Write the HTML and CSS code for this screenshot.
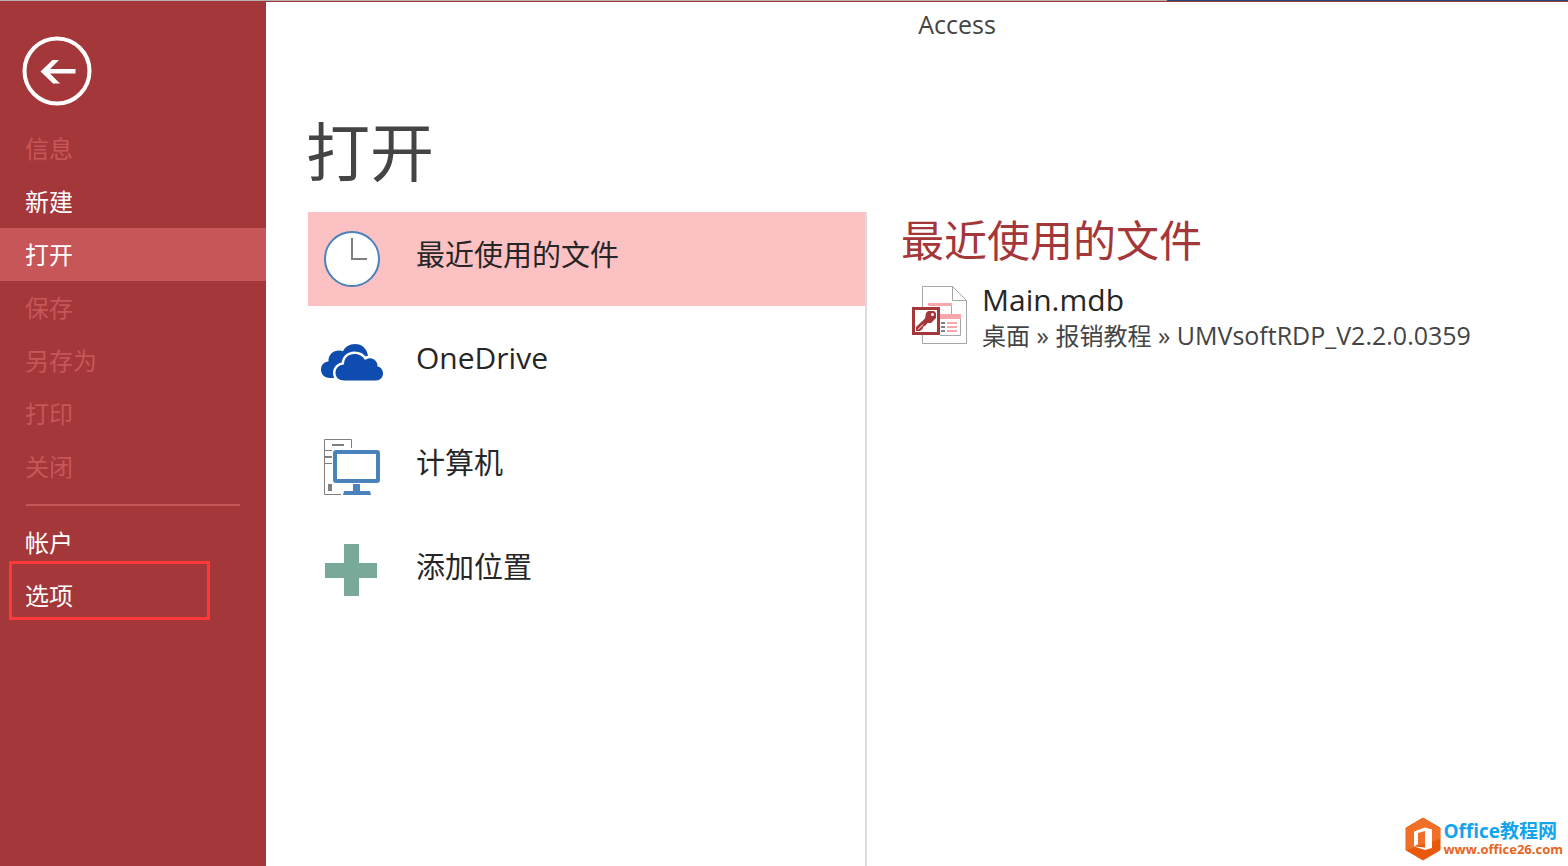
FILE: index.html
```html
<!DOCTYPE html>
<html lang="zh-CN">
<head>
<meta charset="utf-8">
<title>Access</title>
<link rel="stylesheet" href="styles.css">
</head>
<body>
<div class="desktop-edge"></div>
<div class="backstage">
  <nav class="sidebar">
    <button class="back" type="button" aria-label="返回">
      <svg width="70" height="70" viewBox="0 0 70 70">
        <circle cx="35" cy="35" r="32.5" fill="none" stroke="#fff" stroke-width="4"/>
        <path d="M18.500 35.500 L30.500 24 H37 L28 33 H53.500 V37.500 H28 L38 47.500 H31 Z" fill="#fff"/>
      </svg>
    </button>
    <ul class="menu">
      <li><button class="item" type="button" disabled>信息</button></li>
      <li><button class="item" type="button">新建</button></li>
      <li><button class="item active" type="button">打开</button></li>
      <li><button class="item" type="button" disabled>保存</button></li>
      <li><button class="item" type="button" disabled>另存为</button></li>
      <li><button class="item" type="button" disabled>打印</button></li>
      <li><button class="item" type="button" disabled>关闭</button></li>
    </ul>
    <hr class="divider">
    <ul class="menu">
      <li><button class="item" type="button">帐户</button></li>
      <li><button class="item marked" type="button">选项</button></li>
    </ul>
  </nav>
  <main class="content">
    <header class="titlebar">Access</header>
    <h1 class="page-title">打开</h1>
    <div class="panes">
      <section class="places">
        <button class="place selected" type="button">
          <svg class="place-icon" viewBox="0 0 64 64">
            <circle cx="32" cy="32" r="27" fill="#fff" stroke="#4a82bb" stroke-width="2"/>
            <path d="M32 11 V32 H47" fill="none" stroke="#808080" stroke-width="2"/>
          </svg>
          <span class="place-name">最近使用的文件</span>
        </button>
        <button class="place" type="button">
          <svg class="place-icon" viewBox="0 0 64 64">
            <path d="M10 47 C4 47 1 43 1 38.500 C1 34 4 31 8.500 30.500 C8 24 13 19.500 19 19.500 C20.500 19.500 22 19.800 23 20.300 C25 16 29.500 13 35 13 C42 13 47 17.500 48 25 L44 47 Z" fill="#0f4cb0"/>
            <path d="M24 49.500 C19 49.500 15.500 46.500 15.500 42 C15.500 37 19 33.700 24 33.500 C24 27 28.500 23 34.500 23 C39.500 23 43 25.500 45 29 C51 24.500 58 29 57.500 35.500 C61 36 63 39 63 42.500 C63 46.500 60 49.500 56 49.500 Z" fill="#0f4cb0" stroke="#fff" stroke-width="5" paint-order="stroke"/>
          </svg>
          <span class="place-name latin">OneDrive</span>
        </button>
        <button class="place" type="button">
          <svg class="place-icon" viewBox="0 0 64 64">
            <path d="M31.500 13 V4.500 H4.500 V59.500 H21 M4 15.500 H12 M4 28.500 H12" fill="none" stroke="#808080"/>
            <path d="M12 10 H24 M5 22 H12" stroke="#808080" stroke-width="2"/>
            <path d="M8 49 H12 V56 H8 Z" fill="#808080"/>
            <rect x="15" y="17" width="43" height="29" rx="1" fill="#fff" stroke="#4a82bb" stroke-width="4"/>
            <path d="M33 49 H40 V56 H50 L51 60 H23 L24 56 H33 Z" fill="#4a82bb"/>
          </svg>
          <span class="place-name">计算机</span>
        </button>
        <button class="place" type="button">
          <svg class="place-icon" viewBox="0 0 64 64">
            <path d="M24 5 H39 V24 H57 V39 H39 V57 H24 V39 H5 V24 H24 Z" fill="#79a998"/>
          </svg>
          <span class="place-name">添加位置</span>
        </button>
      </section>
      <section class="recent">
        <h2 class="recent-title">最近使用的文件</h2>
        <a class="file" href="#">
          <svg class="file-icon" viewBox="0 0 56 60">
            <path d="M10.500 .5 H40.500 L54.500 14.500 V57.500 H10.500 Z" fill="#fff" stroke="#a6a6a6"/>
            <path d="M40.500 .5 V14.500 H54.500" fill="none" stroke="#a6a6a6"/>
            <path d="M39.500 20 V28 M48.500 33 V49.500 H28" fill="none" stroke="#a6a6a6"/>
            <path d="M16 17 H40 V20 H16 Z M28 28 H49 V33 H28 Z M35 36 H45 V38 H35 Z M35 40 H45 V42 H35 Z M35 44 H45 V46 H35 Z" fill="#f7a6ab"/>
            <path d="M29 36 H33 V38 H29 Z M29 40 H33 V42 H29 Z M29 44 H33 V46 H29 Z" fill="#808080"/>
            <rect x="1.500" y="22.500" width="25" height="25" fill="#fff" stroke="#a4373a" stroke-width="3"/>
            <path d="M14 27 L16 25 H22 L24 27 V32 L19 37 H15.500 L13.500 39.500 L11.500 40.500 L10.500 43 L8 45 H4 V41 L13 32.500 Z" fill="#a4373a"/>
            <circle cx="20.500" cy="28.500" r="1.500" fill="#fff"/>
            <path d="M6 43.500 L11 38.500" stroke="#fff"/>
          </svg>
          <span class="file-text">
            <span class="file-name">Main.mdb</span>
            <span class="file-path"><span class="folder">桌面</span> » <span class="folder">报销教程</span> » UMVsoftRDP_V2.2.0.0359</span>
          </span>
        </a>
      </section>
    </div>
  </main>
</div>
<a class="watermark" href="#">
  <svg width="36" height="44" viewBox="0 0 36 44">
    <path d="M18 1 L35 11 V33 L18 43 L1 33 V11 Z" fill="#e8590c" stroke="#e8590c" stroke-width="1" stroke-linejoin="round"/>
    <path d="M18 1 L35 11 V22 L1 33 V11 Z" fill="#f0702a"/>
    <path d="M9 14.500 L20 10.500 L27 12.500 V31 L20 33 L9 29.500 L20 30.500 V14 L13 16 V27 L9 29.500 Z" fill="#fff"/>
  </svg>
  <span class="watermark-text">
    <span class="watermark-name">Office教程网</span>
    <span class="watermark-url">www.office26.com</span>
  </span>
</a>
</body>
</html>
```
FILE: styles.css
```css
* {
  box-sizing: border-box;
}

body {
  margin: 0;
  min-height: 100vh;
  display: flex;
  flex-direction: column;
  background: #fff;
  color: #262626;
  font-family: "Open Sans", "Noto Sans CJK SC", sans-serif;
}

button {
  border: 0;
  padding: 0;
  background: none;
  color: inherit;
  font: inherit;
  text-align: left;
}

a {
  color: inherit;
  text-decoration: none;
}

.desktop-edge {
  height: 2px;
  border-bottom: 1px solid #a4373a;
  background: linear-gradient(90deg, #b5b1b1 1167px, #1c4a78 1167px);
}

.backstage {
  flex: 1;
  display: grid;
  grid-template-columns: 266px 1fr;
}

.sidebar {
  background: #a4373a;
  color: #fff;
}

.back {
  display: block;
  margin: 34px 0 16px 22px;
  height: 70px;
}

.menu {
  margin: 0;
  padding: 0;
  list-style: none;
}

.item {
  position: relative;
  display: block;
  width: 100%;
  height: 53px;
  padding: 0 25px;
  font-size: 24px;
  line-height: 52px;
}

.item:disabled {
  color: #c75659;
}

.active {
  background: #c75659;
}

.divider {
  height: 2px;
  margin: 11px 26px 10px;
  border: 0;
  background: #c75659;
}

.marked::after {
  content: "";
  position: absolute;
  inset: -8px 56px 2px 9px;
  border: 3px solid #ff3838;
}

.content {
  display: flex;
  flex-direction: column;
  padding-left: 42px;
}

.titlebar {
  padding-left: 38px;
  font-size: 25px;
  line-height: 44px;
  text-align: center;
  color: #444;
}

.page-title {
  margin: 58px 0 12px -2px;
  font-size: 64px;
  font-weight: 400;
  line-height: 96px;
  color: #444;
}

.panes {
  flex: 1;
  display: grid;
  grid-template-columns: 559px 1fr;
}

.places {
  display: flex;
  flex-direction: column;
  gap: 10px;
  border-right: 2px solid #dcdcdc;
}

.place {
  display: flex;
  align-items: center;
  gap: 32px;
  height: 94px;
  padding-left: 12px;
  font-size: 29px;
}

.selected {
  background: #fcc1c3;
}

.place-icon {
  width: 64px;
  height: 64px;
}

.place-name {
  padding-bottom: 8px;
  line-height: 40px;
}

.latin {
  padding-bottom: 10px;
  font-size: 30px;
}

.recent {
  padding-left: 34px;
}

.recent-title {
  margin: 0;
  font-size: 43px;
  font-weight: 400;
  line-height: 58px;
  color: #a4373a;
}

.file {
  display: flex;
  gap: 14px;
  padding: 12px 0 0 11px;
}

.file-icon {
  flex: none;
  width: 56px;
  height: 60px;
  margin-top: 4px;
}

.file-text {
  display: flex;
  flex-direction: column;
  white-space: nowrap;
}

.file-name {
  font-size: 30px;
  line-height: 36px;
}

.file-path {
  font-size: 25px;
  line-height: 34px;
  color: #444;
}

.folder {
  font-size: 24px;
}

.watermark {
  position: absolute;
  right: 5px;
  bottom: 5px;
  display: flex;
  gap: 2px;
}

.watermark-text {
  display: flex;
  flex-direction: column;
  padding-top: 4px;
  font-weight: 700;
}

.watermark-name {
  font-size: 19px;
  line-height: 20px;
  color: #12a5ec;
}

.watermark-url {
  font-size: 13px;
  line-height: 16px;
  color: #e8641c;
}
```
